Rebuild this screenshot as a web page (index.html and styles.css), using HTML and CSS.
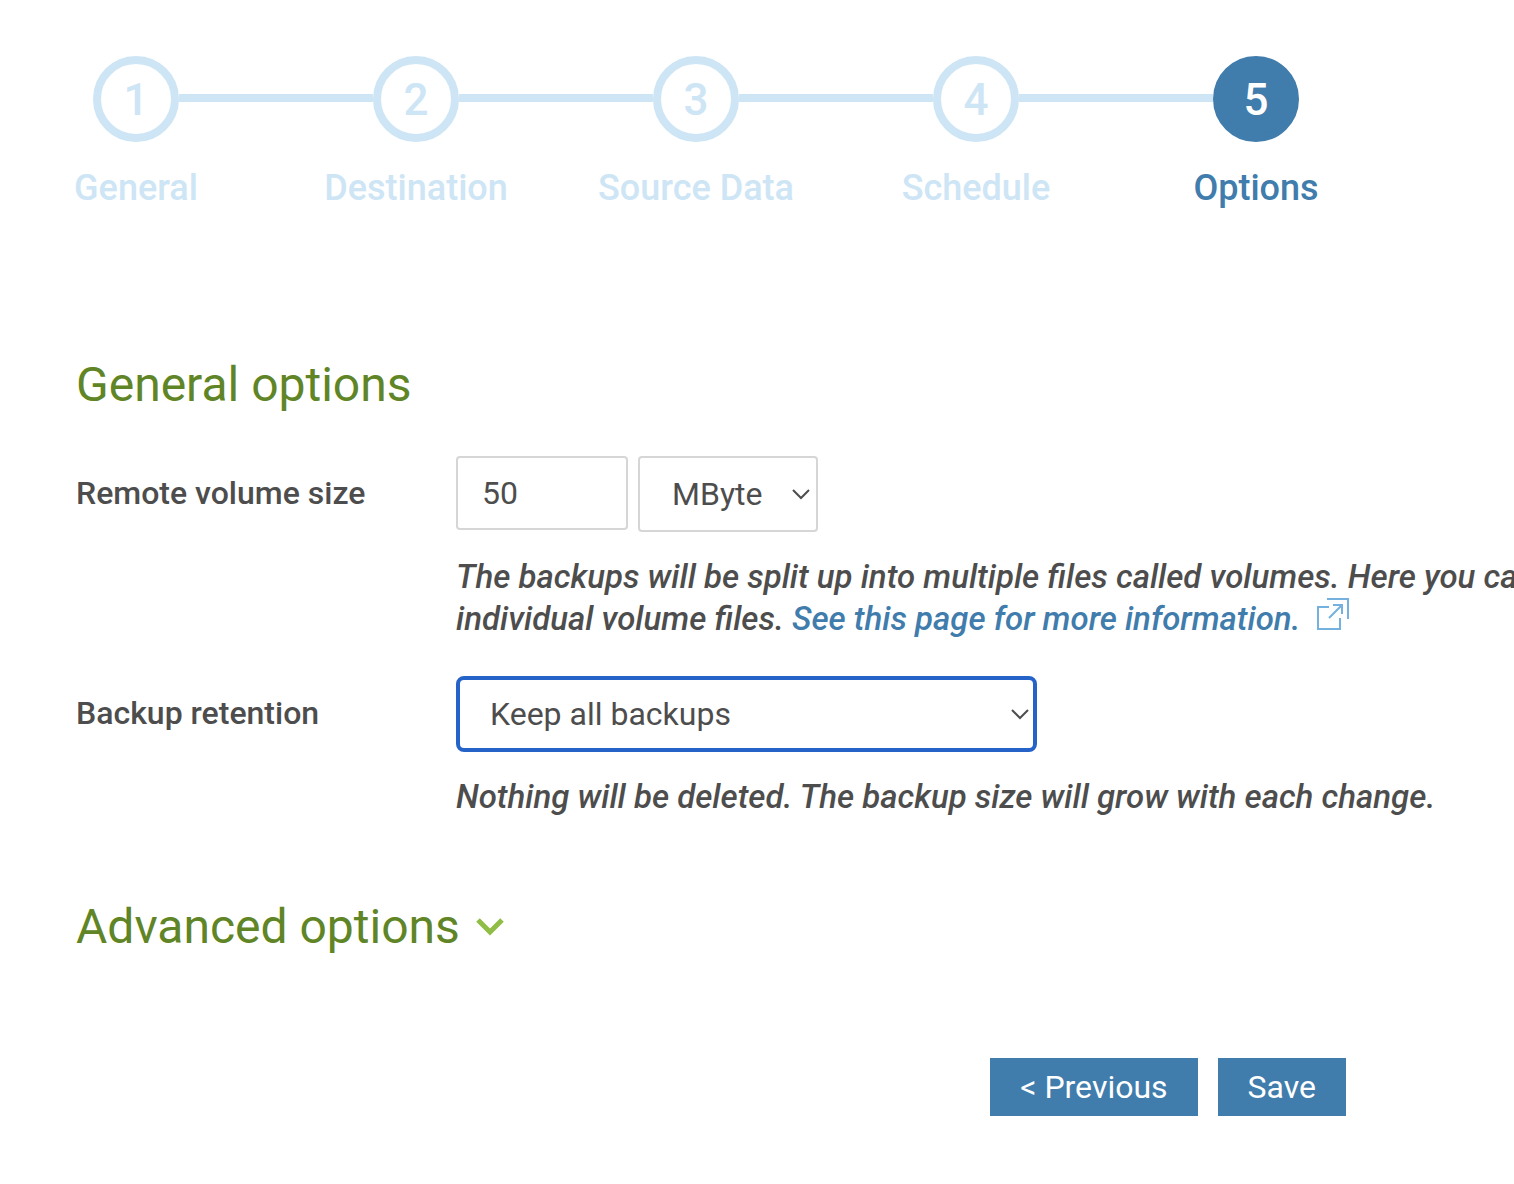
FILE: index.html
```html
<!DOCTYPE html>
<html lang="en">
<head>
  <meta charset="UTF-8">
  <meta name="viewport" content="width=device-width, initial-scale=1.0">
  <title>Backup options</title>
  <link rel="stylesheet" href="styles.css">
</head>
<body>
  <!-- Wizard steps -->
  <ol class="steps">
    <li class="step">
      <div class="track"><span class="circle">1</span></div>
      <span class="step-name">General</span>
    </li>
    <li class="step">
      <div class="track"><span class="circle">2</span></div>
      <span class="step-name">Destination</span>
    </li>
    <li class="step">
      <div class="track"><span class="circle">3</span></div>
      <span class="step-name">Source Data</span>
    </li>
    <li class="step">
      <div class="track"><span class="circle">4</span></div>
      <span class="step-name">Schedule</span>
    </li>
    <li class="step active" aria-current="step">
      <div class="track"><span class="circle">5</span></div>
      <span class="step-name">Options</span>
    </li>
  </ol>

  <form class="options-form">
    <h2>General options</h2>

    <div class="form-row">
      <label for="volume-size">Remote volume size</label>
      <div class="field">
        <div class="inputs">
          <input type="text" id="volume-size" value="50">
          <select class="unit" aria-label="Volume size unit">
            <option>MByte</option>
          </select>
        </div>
        <p class="hint">The backups will be split up into multiple files called volumes. Here you can<br>
          individual volume files. <a href="#volumes">See this page for more information.<svg class="external" viewBox="0 0 32 32" aria-hidden="true"><path d="M12 9H1v22h22V20M10 1h21v20M16 7h9v9M25 7L12 20"/></svg></a></p>
      </div>
    </div>

    <div class="form-row">
      <label for="retention">Backup retention</label>
      <div class="field">
        <div class="inputs">
          <select class="retention" id="retention">
            <option>Keep all backups</option>
          </select>
        </div>
        <p class="hint">Nothing will be deleted. The backup size will grow with each change.</p>
      </div>
    </div>

    <h2 class="advanced">
      <a href="#advanced">Advanced options
        <svg class="chevron" viewBox="0 0 28 18" aria-hidden="true"><path d="M2 2l12 12L26 2"/></svg>
      </a>
    </h2>

    <div class="buttons">
      <button type="button">&lt; Previous</button>
      <button type="submit">Save</button>
    </div>
  </form>
</body>
</html>
```

FILE: styles.css
```css
* {
  box-sizing: border-box;
}
body {
  margin: 0;
  padding: 56px 0 68px;
  font-family: Roboto, "Liberation Sans", sans-serif;
  font-size: 32px;
  line-height: 42px;
  color: #4d4d4d;
  background: #fff;
  overflow-x: hidden;
}
.steps {
  display: grid;
  grid-template-columns: repeat(5, 1fr);
  max-width: 1400px;
  margin: 0 0 0 -4px;
  padding: 0;
  list-style: none;
}
.step {
  text-align: center;
  color: #cde5f5;
}
.track {
  display: flex;
  align-items: center;
}
.track::before,
.track::after {
  content: "";
  flex: 1;
  height: 8px;
  margin-bottom: 2px;
  background: #cde5f5;
}
.step:first-child .track::before,
.step:last-child .track::after {
  background: none;
}
.circle {
  width: 86px;
  height: 86px;
  border: 8px solid #cde5f5;
  border-radius: 50%;
  font-size: 44px;
  font-weight: 500;
  line-height: 72px;
}
.step-name {
  display: block;
  margin-top: 24px;
  font-size: 36px;
  font-weight: 500;
  line-height: 44px;
}
.active {
  color: #407cac;
}
.active .circle {
  border-color: #407cac;
  background: #407cac;
  color: #fff;
}
.options-form {
  padding: 0 0 0 76px;
}
h2 {
  margin: 144px 0 40px;
  font-size: 48px;
  font-weight: 400;
  line-height: 62px;
  color: #5f8526;
}
.form-row {
  display: grid;
  grid-template-columns: 380px 1fr;
  margin-bottom: 36px;
}
label {
  padding-top: 16px;
  font-weight: 500;
}
.field {
  min-width: 0;
}
.inputs {
  display: flex;
  align-items: flex-start;
  gap: 10px;
}
input,
select {
  border: 2px solid #d6d6d6;
  border-radius: 4px;
  background: #fff;
  font: inherit;
  color: #4d4d4d;
}
input {
  width: 172px;
  height: 74px;
  padding: 0 24px;
}
select {
  height: 76px;
  padding: 0 32px;
  appearance: none;
  background: #fff url("data:image/svg+xml,%3Csvg xmlns='http://www.w3.org/2000/svg' width='18' height='12' fill='none' stroke='%234d4d4d' stroke-width='2'%3E%3Cpath d='M1 2l8 8 8-8'/%3E%3C/svg%3E") no-repeat right 6px center;
}
.unit {
  width: 180px;
}
.retention {
  width: 581px;
  padding: 0 30px;
  border: 4px solid #2563c9;
  border-radius: 8px;
  background-position: right 4px center;
}
.hint {
  margin: 24px 0 0;
  font-size: 33px;
  font-style: italic;
  font-weight: 500;
  white-space: nowrap;
}
a {
  color: #407cac;
  text-decoration: none;
}
.external {
  width: 32px;
  height: 32px;
  margin-left: 16px;
  fill: none;
  stroke: #75b1de;
  stroke-width: 2;
}
.advanced {
  margin: 78px 0 100px;
}
.advanced a {
  display: flex;
  align-items: center;
  gap: 16px;
  color: inherit;
}
.chevron {
  width: 28px;
  height: 18px;
  fill: none;
  stroke: #90bd45;
  stroke-width: 5;
}
.buttons {
  display: flex;
  justify-content: flex-end;
  gap: 20px;
  max-width: 1270px;
}
button {
  height: 58px;
  padding: 0 30px;
  border: none;
  background: #407cac;
  font: inherit;
  color: #fff;
  cursor: pointer;
}
```
